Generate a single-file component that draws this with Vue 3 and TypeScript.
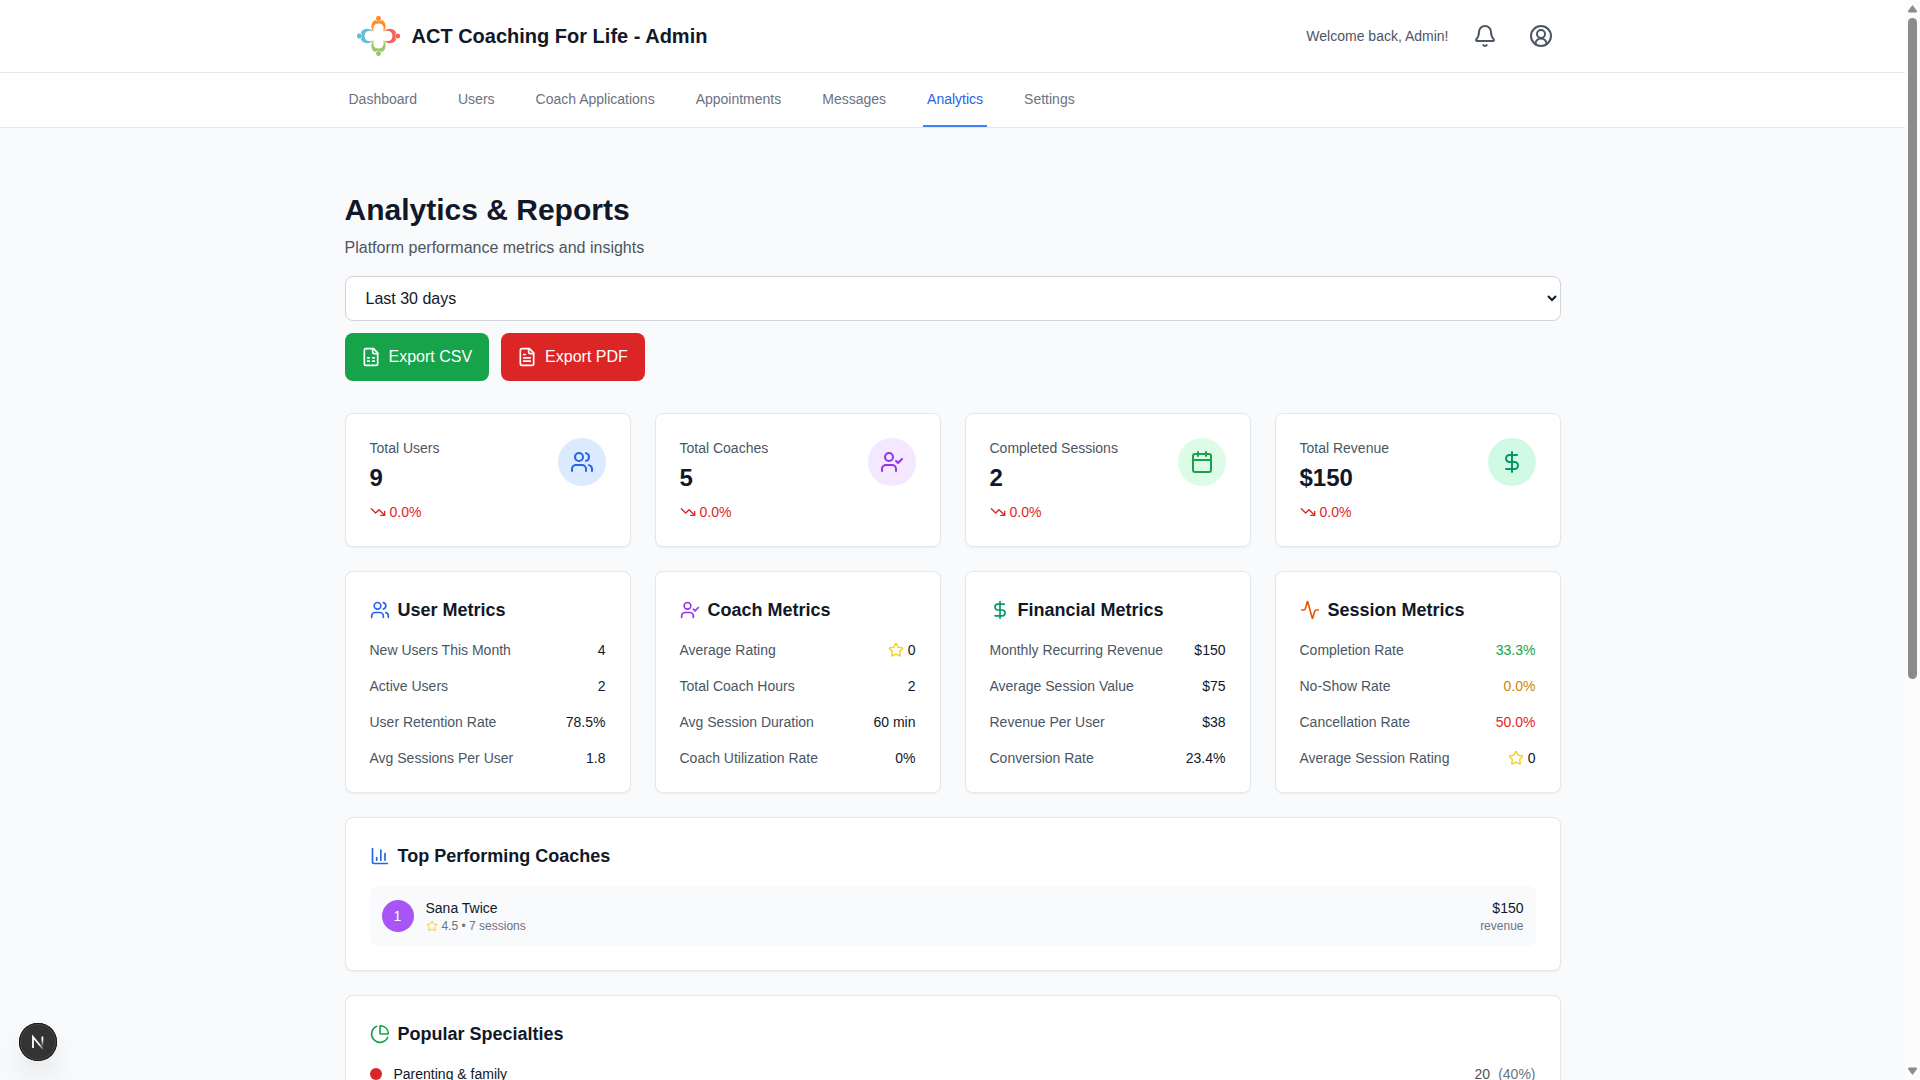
<script setup lang="ts">
import { ref } from 'vue'

type Shape = { d: string[] }

const icons: Record<string, Shape> = {
  users: {
    d: [
      'M16 21v-2a4 4 0 0 0-4-4H6a4 4 0 0 0-4 4v2',
      'M5 7a4 4 0 1 0 8 0a4 4 0 1 0-8 0',
      'M22 21v-2a4 4 0 0 0-3-3.87',
      'M16 3.13a4 4 0 0 1 0 7.75',
    ],
  },
  userCheck: {
    d: ['M16 21v-2a4 4 0 0 0-4-4H6a4 4 0 0 0-4 4v2', 'M5 7a4 4 0 1 0 8 0a4 4 0 1 0-8 0', 'm16 11 2 2 4-4'],
  },
  calendar: {
    d: ['M8 2v4', 'M16 2v4', 'M5 4h14a2 2 0 0 1 2 2v14a2 2 0 0 1-2 2H5a2 2 0 0 1-2-2V6a2 2 0 0 1 2-2z', 'M3 10h18'],
  },
  dollar: { d: ['M12 2v20', 'M17 5H9.5a3.5 3.5 0 0 0 0 7h5a3.5 3.5 0 0 1 0 7H6'] },
  activity: {
    d: [
      'M22 12h-2.48a2 2 0 0 0-1.93 1.46l-2.35 8.36a.25.25 0 0 1-.48 0L9.24 2.18a.25.25 0 0 0-.48 0l-2.35 8.36A2 2 0 0 1 4.49 12H2',
    ],
  },
  trendDown: { d: ['m22 17-8.5-8.5-5 5L2 7', 'M16 17h6v-6'] },
  star: {
    d: [
      'M11.525 2.295a.53.53 0 0 1 .95 0l2.31 4.679a2.123 2.123 0 0 0 1.595 1.16l5.166.756a.53.53 0 0 1 .294.904l-3.736 3.638a2.123 2.123 0 0 0-.611 1.878l.882 5.14a.53.53 0 0 1-.771.56l-4.618-2.428a2.122 2.122 0 0 0-1.973 0L6.396 21.01a.53.53 0 0 1-.77-.56l.881-5.139a2.122 2.122 0 0 0-.611-1.879L2.16 9.795a.53.53 0 0 1 .294-.906l5.165-.755a2.122 2.122 0 0 0 1.597-1.16z',
    ],
  },
  sheet: {
    d: [
      'M15 2H6a2 2 0 0 0-2 2v16a2 2 0 0 0 2 2h12a2 2 0 0 0 2-2V7Z',
      'M14 2v4a2 2 0 0 0 2 2h4',
      'M8 13h2',
      'M14 13h2',
      'M8 17h2',
      'M14 17h2',
    ],
  },
  fileText: {
    d: [
      'M15 2H6a2 2 0 0 0-2 2v16a2 2 0 0 0 2 2h12a2 2 0 0 0 2-2V7Z',
      'M14 2v4a2 2 0 0 0 2 2h4',
      'M10 9H8',
      'M16 13H8',
      'M16 17H8',
    ],
  },
  chart: { d: ['M3 3v16a2 2 0 0 0 2 2h16', 'M18 17V9', 'M13 17V5', 'M8 17v-3'] },
  pie: {
    d: [
      'M21 12c.552 0 1.005-.449.95-.998a10 10 0 0 0-8.953-8.951c-.55-.055-.998.398-.998.95v8a1 1 0 0 0 1 1z',
      'M21.21 15.89A10 10 0 1 1 8 2.83',
    ],
  },
}

const logoFigures = [
  { place: 'translate(21.5 0)', fill: '#ff8f28' },
  { place: 'translate(43 20) rotate(90)', fill: '#fb5f5a' },
  { place: 'translate(21.5 40) rotate(180)', fill: '#9bc96b' },
  { place: 'translate(0 20) rotate(270)', fill: '#5fbfd3' },
]

const navItems = ['Dashboard', 'Users', 'Coach Applications', 'Appointments', 'Messages', 'Analytics', 'Settings']
const activeNav = ref('Analytics')
const range = ref('30')

const stats = [
  { label: 'Total Users', value: '9', icon: 'users', tone: 'blue' },
  { label: 'Total Coaches', value: '5', icon: 'userCheck', tone: 'purple' },
  { label: 'Completed Sessions', value: '2', icon: 'calendar', tone: 'green' },
  { label: 'Total Revenue', value: '$150', icon: 'dollar', tone: 'emerald' },
]

type Row = { label: string; value: string; tone?: string; star?: boolean }
const groups: { title: string; icon: string; tone: string; rows: Row[] }[] = [
  {
    title: 'User Metrics', icon: 'users', tone: 'blue',
    rows: [
      { label: 'New Users This Month', value: '4' },
      { label: 'Active Users', value: '2' },
      { label: 'User Retention Rate', value: '78.5%' },
      { label: 'Avg Sessions Per User', value: '1.8' },
    ],
  },
  {
    title: 'Coach Metrics', icon: 'userCheck', tone: 'purple',
    rows: [
      { label: 'Average Rating', value: '0', star: true },
      { label: 'Total Coach Hours', value: '2' },
      { label: 'Avg Session Duration', value: '60 min' },
      { label: 'Coach Utilization Rate', value: '0%' },
    ],
  },
  {
    title: 'Financial Metrics', icon: 'dollar', tone: 'emerald',
    rows: [
      { label: 'Monthly Recurring Revenue', value: '$150' },
      { label: 'Average Session Value', value: '$75' },
      { label: 'Revenue Per User', value: '$38' },
      { label: 'Conversion Rate', value: '23.4%' },
    ],
  },
  {
    title: 'Session Metrics', icon: 'activity', tone: 'orange',
    rows: [
      { label: 'Completion Rate', value: '33.3%', tone: 'green' },
      { label: 'No-Show Rate', value: '0.0%', tone: 'amber' },
      { label: 'Cancellation Rate', value: '50.0%', tone: 'red' },
      { label: 'Average Session Rating', value: '0', star: true },
    ],
  },
]

const coaches = [{ name: 'Sana Twice', rating: '4.5', sessions: 7, revenue: '$150' }]
const specialties = [{ name: 'Parenting & family', count: 20, share: '40%', tone: 'red' }]
</script>

<template>
  <div class="window">
    <div class="page">
      <header class="topbar">
        <div class="container topbar-inner">
          <div class="brand">
            <svg class="logo" viewBox="0 0 44 40" aria-hidden="true">
              <g v-for="f in logoFigures" :key="f.fill" :transform="f.place" :fill="f.fill">
                <circle cy="2.4" r="2.5" />
                <path d="M-4.500 15.800C-8.200 13.500-8.200 6-3.400 3.900Q0 6.400 3.400 3.900C8.200 6 8.200 13.500 4.500 15.800C6 12.500 5.200 7.600 0 7.600C-5.200 7.600-6 12.500-4.500 15.800Z" />
              </g>
            </svg>
            <span class="brand-name">ACT Coaching For Life - Admin</span>
          </div>
          <div class="account">
            <span class="welcome">Welcome back, Admin!</span>
            <button type="button" class="icon-button" aria-label="Notifications">
              <svg class="icon i24" viewBox="0 0 24 24" aria-hidden="true">
                <path d="M10.268 21a2 2 0 0 0 3.464 0" />
                <path d="M3.262 15.326A1 1 0 0 0 4 17h16a1 1 0 0 0 .740-1.673C19.410 13.956 18 12.499 18 8A6 6 0 0 0 6 8c0 4.499-1.411 5.956-2.738 7.326" />
              </svg>
            </button>
            <button type="button" class="icon-button" aria-label="Account">
              <svg class="icon i24" viewBox="0 0 24 24" aria-hidden="true">
                <circle cx="12" cy="12" r="10" />
                <circle cx="12" cy="10" r="4" />
                <path d="M6.500 20.300V19.500a5.500 5 0 0 1 11 0v0.800" />
              </svg>
            </button>
          </div>
        </div>
      </header>

      <nav class="nav" aria-label="Admin">
        <div class="container nav-inner">
          <a
            v-for="item in navItems"
            :key="item"
            href="#"
            class="nav-link"
            :class="{ active: item === activeNav }"
            @click.prevent="activeNav = item"
          >{{ item }}</a>
        </div>
      </nav>

      <main class="container main">
        <section class="intro">
          <h1>Analytics &amp; Reports</h1>
          <p>Platform performance metrics and insights</p>
          <select v-model="range" aria-label="Date range">
            <option value="7">Last 7 days</option>
            <option value="30">Last 30 days</option>
            <option value="90">Last 90 days</option>
          </select>
          <div class="actions">
            <button type="button" class="export csv">
              <svg class="icon i20" viewBox="0 0 24 24" aria-hidden="true"><path v-for="d in icons.sheet.d" :key="d" :d="d" /></svg>
              Export CSV
            </button>
            <button type="button" class="export pdf">
              <svg class="icon i20" viewBox="0 0 24 24" aria-hidden="true"><path v-for="d in icons.fileText.d" :key="d" :d="d" /></svg>
              Export PDF
            </button>
          </div>
        </section>

        <section class="grid">
          <article v-for="s in stats" :key="s.label" class="card stat">
            <div>
              <p class="label">{{ s.label }}</p>
              <p class="figure">{{ s.value }}</p>
              <p class="trend red">
                <svg class="icon i16" viewBox="0 0 24 24" aria-hidden="true"><path v-for="d in icons.trendDown.d" :key="d" :d="d" /></svg>
                <span>0.0%</span>
              </p>
            </div>
            <div class="bubble" :class="[s.tone, `tint-${s.tone}`]">
              <svg class="icon i24" viewBox="0 0 24 24" aria-hidden="true"><path v-for="d in icons[s.icon].d" :key="d" :d="d" /></svg>
            </div>
          </article>
        </section>

        <section class="grid">
          <article v-for="g in groups" :key="g.title" class="card">
            <h2>
              <svg class="icon i20" :class="g.tone" viewBox="0 0 24 24" aria-hidden="true"><path v-for="d in icons[g.icon].d" :key="d" :d="d" /></svg>
              {{ g.title }}
            </h2>
            <dl class="metrics">
              <div v-for="r in g.rows" :key="r.label" class="metric">
                <dt>{{ r.label }}</dt>
                <dd :class="r.tone">
                  <svg v-if="r.star" class="icon i16 yellow" viewBox="0 0 24 24" aria-hidden="true"><path v-for="d in icons.star.d" :key="d" :d="d" /></svg>
                  {{ r.value }}
                </dd>
              </div>
            </dl>
          </article>
        </section>

        <section class="card">
          <h2>
            <svg class="icon i20 blue" viewBox="0 0 24 24" aria-hidden="true"><path v-for="d in icons.chart.d" :key="d" :d="d" /></svg>
            Top Performing Coaches
          </h2>
          <div v-for="(c, i) in coaches" :key="c.name" class="coach">
            <span class="rank">{{ i + 1 }}</span>
            <div class="coach-info">
              <p class="coach-name">{{ c.name }}</p>
              <p class="small">
                <svg class="icon i12 yellow" viewBox="0 0 24 24" aria-hidden="true"><path v-for="d in icons.star.d" :key="d" :d="d" /></svg>
                <span>{{ c.rating }} • {{ c.sessions }} sessions</span>
              </p>
            </div>
            <div class="coach-revenue">
              <p class="coach-name">{{ c.revenue }}</p>
              <p class="small end">revenue</p>
            </div>
          </div>
        </section>

        <section class="card">
          <h2>
            <svg class="icon i20 green" viewBox="0 0 24 24" aria-hidden="true"><path v-for="d in icons.pie.d" :key="d" :d="d" /></svg>
            Popular Specialties
          </h2>
          <div v-for="s in specialties" :key="s.name" class="specialty">
            <span class="dot" :class="s.tone"></span>
            <span class="specialty-name">{{ s.name }}</span>
            <span class="count">{{ s.count }}</span>
            <span class="share">({{ s.share }})</span>
          </div>
        </section>
      </main>
    </div>

    <div class="scrollbar" aria-hidden="true">
      <svg class="arrow" viewBox="0 0 9 8"><path d="M4.500 0 9 6Q9 7.500 8 7.500H1Q0 7.500 0 6Z" /></svg>
      <div class="track"><div class="thumb"></div></div>
      <svg class="arrow" viewBox="0 0 9 8"><path d="M4.500 8 9 2Q9 0.500 8 0.500H1Q0 0.500 0 2Z" /></svg>
    </div>

    <button type="button" class="devtools" aria-label="Open developer tools">
      <svg viewBox="0 0 38 38" aria-hidden="true">
        <defs>
          <linearGradient id="stem" x1="0" y1="0" x2="0" y2="1">
            <stop offset="0.3" stop-color="#fff" /><stop offset="1" stop-color="#fff" stop-opacity="0" />
          </linearGradient>
          <linearGradient id="diag" x1="0" y1="0" x2="1" y2="1">
            <stop offset="0.6" stop-color="#fff" /><stop offset="1" stop-color="#fff" stop-opacity="0.2" />
          </linearGradient>
        </defs>
        <path d="M14 25V14L24 26" fill="none" stroke="url(#diag)" stroke-width="1.800" />
        <rect x="22.500" y="13.500" width="1.800" height="10" fill="url(#stem)" />
      </svg>
    </button>
  </div>
</template>

<style>
body {
  background: #f9fafb;
}
</style>

<style scoped>
* {
  box-sizing: border-box;
}

.window {
  display: grid;
  grid-template-columns: minmax(0, 1fr) 15px;
  height: 100vh;
  overflow: hidden;
  background: #f9fafb;
  color: #111827;
  font-family: "Liberation Sans", Arial, sans-serif;
  font-size: 16px;
  line-height: 24px;
}

.page {
  overflow: hidden;
}

h1,
h2,
p,
dl,
dd {
  margin: 0;
}

button,
select {
  font: inherit;
}

.container {
  max-width: 1280px;
  margin: 0 auto;
  padding: 0 32px;
}

.topbar,
.nav {
  background: #fff;
  border-bottom: 1px solid #e5e7eb;
}

.topbar-inner {
  display: flex;
  align-items: center;
  justify-content: space-between;
  height: 72px;
}

.brand {
  display: flex;
  align-items: center;
  gap: 11px;
  padding-left: 12px;
}

.logo {
  width: 44px;
  height: 40px;
}

.brand-name {
  font-size: 20px;
  line-height: 28px;
  font-weight: 700;
}

.account {
  display: flex;
  align-items: center;
  gap: 16px;
  color: #4b5563;
}

.welcome {
  font-size: 14px;
  line-height: 20px;
}

.icon-button {
  display: flex;
  padding: 8px;
  border: 0;
  background: none;
  color: inherit;
  cursor: pointer;
}

.icon {
  flex: none;
  fill: none;
  stroke: currentColor;
  stroke-width: 2;
  stroke-linecap: round;
  stroke-linejoin: round;
}

.i12 { width: 12px; height: 12px; }
.i16 { width: 16px; height: 16px; }
.i20 { width: 20px; height: 20px; }
.i24 { width: 24px; height: 24px; }

.nav-inner {
  display: flex;
  gap: 33px;
}

.nav-link {
  padding: 16px 4px;
  border-bottom: 2px solid transparent;
  color: #6b7280;
  font-size: 14px;
  line-height: 20px;
  text-decoration: none;
}

.nav-link.active {
  border-color: #3b82f6;
  color: #2563eb;
}

.main {
  display: flex;
  flex-direction: column;
  gap: 24px;
  padding-top: 64px;
}

.intro {
  margin-bottom: 8px;
}

h1 {
  font-size: 30px;
  line-height: 36px;
}

.intro p {
  margin-top: 8px;
  color: #4b5563;
}

select {
  display: block;
  width: 100%;
  height: 45px;
  margin: 16px 0 12px;
  padding: 8px 16px;
  border: 1px solid #d1d5db;
  border-radius: 8px;
  background: #fff;
  color: #111827;
}

.actions {
  display: flex;
  gap: 12px;
}

.export {
  display: flex;
  align-items: center;
  gap: 8px;
  padding: 12px 17px 12px 16px;
  border: 0;
  border-radius: 8px;
  color: #fff;
  line-height: 24px;
  cursor: pointer;
}

.csv { background: #16a34a; }
.pdf { background: #dc2626; }

.grid {
  display: grid;
  grid-template-columns: repeat(4, minmax(0, 1fr));
  gap: 24px;
}

.card {
  padding: 24px;
  border: 1px solid #e5e7eb;
  border-radius: 8px;
  background: #fff;
  box-shadow: 0 1px 2px rgba(0, 0, 0, 0.05);
}

.stat {
  display: flex;
  align-items: flex-start;
  justify-content: space-between;
}

.label {
  color: #4b5563;
  font-size: 14px;
  line-height: 20px;
}

.figure {
  margin: 4px 0 8px;
  font-size: 24px;
  line-height: 32px;
  font-weight: 700;
}

.trend {
  display: flex;
  align-items: center;
  gap: 4px;
  font-size: 14px;
  line-height: 20px;
}

.bubble {
  display: flex;
  padding: 12px;
  border-radius: 50%;
}

.tint-blue { background: #dbeafe; }
.tint-purple { background: #f3e8ff; }
.tint-green { background: #dcfce7; }
.tint-emerald { background: #d1fae5; }

h2 {
  display: flex;
  align-items: center;
  gap: 8px;
  margin-bottom: 16px;
  font-size: 18px;
  line-height: 28px;
}

.metrics {
  display: flex;
  flex-direction: column;
  gap: 16px;
  font-size: 14px;
  line-height: 20px;
}

.metric {
  display: flex;
  justify-content: space-between;
}

dt {
  color: #4b5563;
}

dd {
  display: flex;
  align-items: center;
  gap: 4px;
}

.blue { color: #2563eb; }
.purple { color: #9333ea; }
.green { color: #16a34a; }
.emerald { color: #059669; }
.orange { color: #ea580c; }
.amber { color: #ca8a04; }
.red { color: #dc2626; }
.yellow { color: #facc15; }

.coach {
  display: flex;
  align-items: center;
  gap: 12px;
  padding: 12px;
  border-radius: 8px;
  background: #f9fafb;
}

.rank {
  display: flex;
  align-items: center;
  justify-content: center;
  width: 32px;
  height: 32px;
  border-radius: 50%;
  background: #a855f7;
  color: #fff;
  font-size: 14px;
  line-height: 20px;
}

.coach-info {
  flex: 1;
}

.coach-name {
  font-size: 14px;
  line-height: 20px;
}

.coach-revenue {
  text-align: right;
}

.small {
  display: flex;
  align-items: center;
  gap: 4px;
  color: #6b7280;
  font-size: 12px;
  line-height: 16px;
}

.end {
  justify-content: flex-end;
}

.specialty {
  display: flex;
  align-items: center;
  font-size: 14px;
  line-height: 20px;
}

.dot {
  width: 12px;
  height: 12px;
  margin-right: 12px;
  border-radius: 50%;
  background: currentColor;
}

.specialty-name {
  flex: 1;
}

.count {
  color: #4b5563;
}

.share {
  margin-left: 8px;
  color: #6b7280;
}

.scrollbar {
  display: flex;
  flex-direction: column;
  align-items: center;
  padding: 5px 0;
  background: #fcfcfc;
}

.arrow {
  width: 9px;
  height: 8px;
  fill: #8b8b8b;
}

.track {
  display: grid;
  grid-template-rows: 661fr 383fr;
  flex: 1;
  width: 9px;
  padding: 5px 0;
}

.thumb {
  border-radius: 5px;
  background: #8b8b8b;
}

.devtools {
  position: fixed;
  bottom: 19px;
  left: 19px;
  width: 38px;
  height: 38px;
  padding: 0;
  border: 0;
  border-radius: 50%;
  background: #333;
  box-shadow: inset 0 0 0 1px #171717, inset 0 0 0 2px #4a4a4a, 0 16px 32px -8px rgba(0, 0, 0, 0.24);
  cursor: pointer;
}

.devtools svg {
  display: block;
  width: 38px;
  height: 38px;
}
</style>
